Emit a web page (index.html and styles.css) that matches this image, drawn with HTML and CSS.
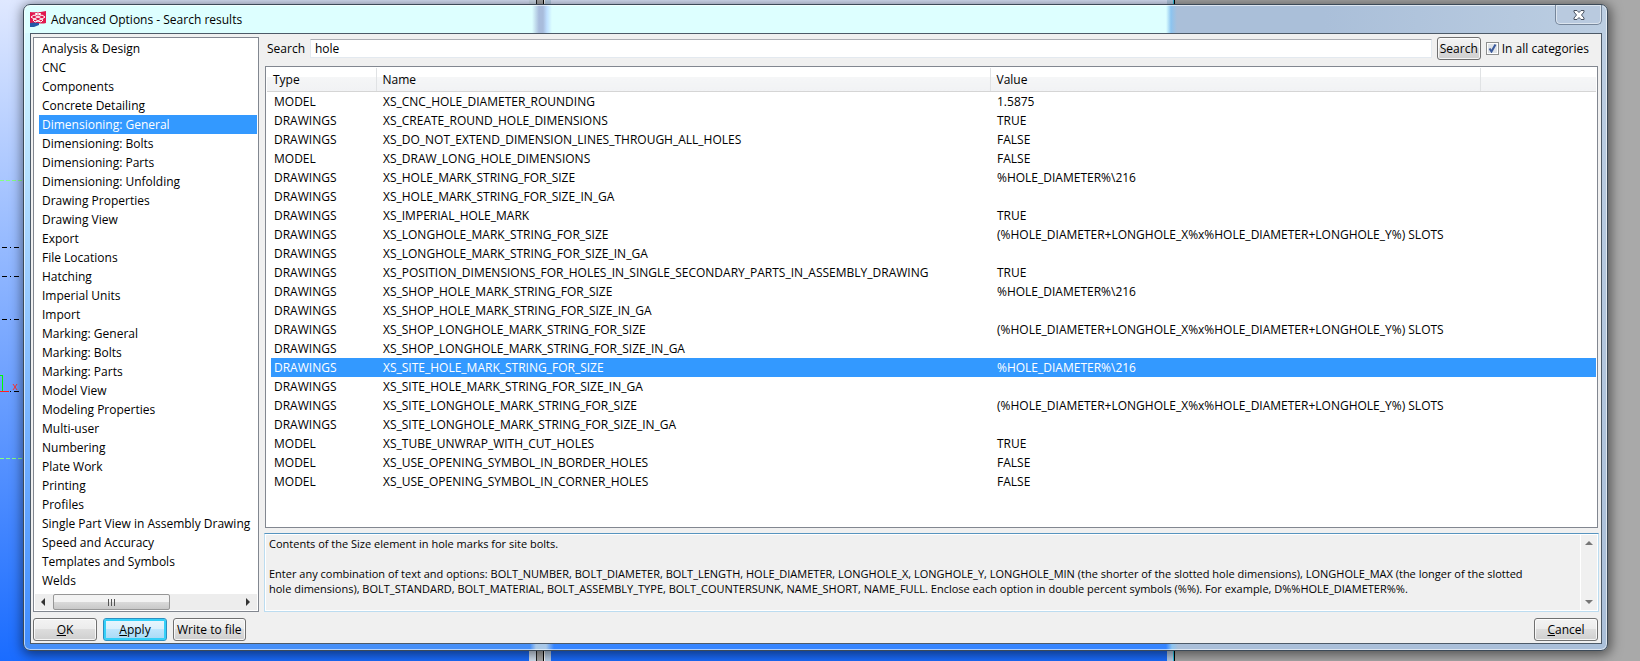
FILE: index.html
```html
<!DOCTYPE html>
<html lang="en">
<head>
<meta charset="utf-8">
<title>Advanced Options - Search results</title>
<link rel="stylesheet" href="styles.css">
</head>
<body>
<div class="desktop" aria-hidden="true">
  <div class="view view-left">
    <svg class="axes" viewBox="0 0 24 661" width="24" height="661">
      <g fill="none" shape-rendering="crispEdges">
        <path d="M0 180.500H24M0 458.500H24" stroke="#84ff84" stroke-dasharray="4 2"/>
        <path d="M2 247.500H20M2 276.500H20M2 319.500H20" stroke="#000" stroke-dasharray="5 3 1 3"/>
        <path d="M10 391.500H20" stroke="#000" stroke-dasharray="1 3 5 3"/>
        <path d="M0 375.500H2.500V391" stroke="#0f0"/>
        <path d="M0 391.500H9" stroke="#f22"/>
      </g>
      <path d="M13 384l4 6M17 384l-4 6" stroke="#f33" fill="none"/>
    </svg>
  </div>
  <div class="gap"></div>
  <div class="view view-right"></div>
  <div class="edge"></div>
</div>
<main class="window">
  <header class="titlebar">
    <svg class="logo" viewBox="0 0 16 16" width="16" height="16">
      <path d="M0 10h9v4l-5 2H0z" fill="#2458a8"/>
      <path d="M0 1q8 1 16-1v12q-4 1-8 0t-8 0z" fill="#e0194f"/>
      <path d="M1 6l3-2 4 2 4-2 3 2-3 2-4-2-4 2zM3 9l2-1 3 2 3-2 2 1-2 2-3-1-3 1zM5 3l3-1 3 1-3 1z" fill="none" stroke="#fff" stroke-width="1"/>
    </svg>
    <h1>Advanced Options - Search results</h1>
    <button class="close" type="button" aria-label="Close">
      <svg viewBox="0 0 12 10" width="12" height="10"><path d="M1 .5h3l2 2 2-2h3v1.500L8.500 5 11 8v1.500H8l-2-2-2 2H1V8l2.500-3L1 2z" fill="#fff" stroke="#4a5260"/></svg>
    </button>
  </header>
  <div class="client">
    <div class="panes">
      <nav class="categories">
        <ul>
          <li>Analysis &amp; Design</li><li>CNC</li><li>Components</li><li>Concrete Detailing</li><li class="selected">Dimensioning: General</li><li>Dimensioning: Bolts</li><li>Dimensioning: Parts</li><li>Dimensioning: Unfolding</li><li>Drawing Properties</li><li>Drawing View</li><li>Export</li><li>File Locations</li><li>Hatching</li><li>Imperial Units</li><li>Import</li><li>Marking: General</li><li>Marking: Bolts</li><li>Marking: Parts</li><li>Model View</li><li>Modeling Properties</li><li>Multi-user</li><li>Numbering</li><li>Plate Work</li><li>Printing</li><li>Profiles</li><li>Single Part View in Assembly Drawing</li><li>Speed and Accuracy</li><li>Templates and Symbols</li><li>Welds</li>
        </ul>
        <div class="hscroll">
          <svg viewBox="0 0 18 16" width="18" height="16"><path d="M10 4v8L6 8z" fill="#333"/></svg>
          <span class="thumb"><i></i><i></i><i></i></span>
          <svg viewBox="0 0 18 16" width="18" height="16"><path d="M7 4v8l4-4z" fill="#333"/></svg>
        </div>
      </nav>
      <section class="results">
        <form class="search">
          <label for="q">Search</label>
          <input id="q" class="query" type="text" value="hole">
          <button class="btn" type="button">Search</button>
          <span class="check"><input id="all" type="checkbox" checked><label for="all">In all categories</label></span>
        </form>
        <div class="grid">
          <table>
            <colgroup><col class="c-type"><col class="c-name"><col class="c-value"><col></colgroup>
            <thead><tr><th>Type</th><th>Name</th><th>Value</th><th></th></tr></thead>
            <tbody>
              <tr><td>MODEL</td><td>XS_CNC_HOLE_DIAMETER_ROUNDING</td><td>1.5875</td><td></td></tr>
              <tr><td>DRAWINGS</td><td>XS_CREATE_ROUND_HOLE_DIMENSIONS</td><td>TRUE</td><td></td></tr>
              <tr><td>DRAWINGS</td><td>XS_DO_NOT_EXTEND_DIMENSION_LINES_THROUGH_ALL_HOLES</td><td>FALSE</td><td></td></tr>
              <tr><td>MODEL</td><td>XS_DRAW_LONG_HOLE_DIMENSIONS</td><td>FALSE</td><td></td></tr>
              <tr><td>DRAWINGS</td><td>XS_HOLE_MARK_STRING_FOR_SIZE</td><td>%HOLE_DIAMETER%\216</td><td></td></tr>
              <tr><td>DRAWINGS</td><td>XS_HOLE_MARK_STRING_FOR_SIZE_IN_GA</td><td></td><td></td></tr>
              <tr><td>DRAWINGS</td><td>XS_IMPERIAL_HOLE_MARK</td><td>TRUE</td><td></td></tr>
              <tr><td>DRAWINGS</td><td>XS_LONGHOLE_MARK_STRING_FOR_SIZE</td><td>(%HOLE_DIAMETER+LONGHOLE_X%x%HOLE_DIAMETER+LONGHOLE_Y%) SLOTS</td><td></td></tr>
              <tr><td>DRAWINGS</td><td>XS_LONGHOLE_MARK_STRING_FOR_SIZE_IN_GA</td><td></td><td></td></tr>
              <tr><td>DRAWINGS</td><td>XS_POSITION_DIMENSIONS_FOR_HOLES_IN_SINGLE_SECONDARY_PARTS_IN_ASSEMBLY_DRAWING</td><td>TRUE</td><td></td></tr>
              <tr><td>DRAWINGS</td><td>XS_SHOP_HOLE_MARK_STRING_FOR_SIZE</td><td>%HOLE_DIAMETER%\216</td><td></td></tr>
              <tr><td>DRAWINGS</td><td>XS_SHOP_HOLE_MARK_STRING_FOR_SIZE_IN_GA</td><td></td><td></td></tr>
              <tr><td>DRAWINGS</td><td>XS_SHOP_LONGHOLE_MARK_STRING_FOR_SIZE</td><td>(%HOLE_DIAMETER+LONGHOLE_X%x%HOLE_DIAMETER+LONGHOLE_Y%) SLOTS</td><td></td></tr>
              <tr><td>DRAWINGS</td><td>XS_SHOP_LONGHOLE_MARK_STRING_FOR_SIZE_IN_GA</td><td></td><td></td></tr>
              <tr class="selected"><td>DRAWINGS</td><td>XS_SITE_HOLE_MARK_STRING_FOR_SIZE</td><td>%HOLE_DIAMETER%\216</td><td></td></tr>
              <tr><td>DRAWINGS</td><td>XS_SITE_HOLE_MARK_STRING_FOR_SIZE_IN_GA</td><td></td><td></td></tr>
              <tr><td>DRAWINGS</td><td>XS_SITE_LONGHOLE_MARK_STRING_FOR_SIZE</td><td>(%HOLE_DIAMETER+LONGHOLE_X%x%HOLE_DIAMETER+LONGHOLE_Y%) SLOTS</td><td></td></tr>
              <tr><td>DRAWINGS</td><td>XS_SITE_LONGHOLE_MARK_STRING_FOR_SIZE_IN_GA</td><td></td><td></td></tr>
              <tr><td>MODEL</td><td>XS_TUBE_UNWRAP_WITH_CUT_HOLES</td><td>TRUE</td><td></td></tr>
              <tr><td>MODEL</td><td>XS_USE_OPENING_SYMBOL_IN_BORDER_HOLES</td><td>FALSE</td><td></td></tr>
              <tr><td>MODEL</td><td>XS_USE_OPENING_SYMBOL_IN_CORNER_HOLES</td><td>FALSE</td><td></td></tr>
            </tbody>
          </table>
        </div>
        <div class="help">
          <div class="help-text">
            <p>Contents of the Size element in hole marks for site bolts.</p>
            <p>Enter any combination of text and options: BOLT_NUMBER, BOLT_DIAMETER, BOLT_LENGTH, HOLE_DIAMETER, LONGHOLE_X, LONGHOLE_Y, LONGHOLE_MIN (the shorter of the slotted hole dimensions), LONGHOLE_MAX (the longer of the slotted<br>hole dimensions), BOLT_STANDARD, BOLT_MATERIAL, BOLT_ASSEMBLY_TYPE, BOLT_COUNTERSUNK, NAME_SHORT, NAME_FULL. Enclose each option in double percent symbols (%%). For example, D%%HOLE_DIAMETER%%.</p>
          </div>
          <div class="vscroll">
            <svg viewBox="0 0 16 16" width="16" height="16"><path d="M4 10h8L8 6z" fill="#777"/></svg>
            <svg viewBox="0 0 16 16" width="16" height="16"><path d="M4 6h8l-4 4z" fill="#777"/></svg>
          </div>
        </div>
      </section>
    </div>
    <footer class="actions">
      <button class="btn wide" type="button"><u>O</u>K</button>
      <button class="btn wide default" type="button"><u>A</u>pply</button>
      <button class="btn" type="button">Write to file</button>
      <button class="btn wide cancel" type="button"><u>C</u>ancel</button>
    </footer>
  </div>
</main>
</body>
</html>
```
FILE: styles.css
```css
* { box-sizing: border-box; }
html, body { height: 100%; }
body {
  margin: 0;
  padding: 4px 32px 10px 23px;
  overflow: hidden;
  background: #a9a9a9;
  color: #000;
  font: 12px/15px "Open Sans", "Noto Sans", sans-serif;
}
button, input { font: inherit; color: inherit; }

.desktop { position: absolute; inset: 0; display: flex; z-index: -1; }
.view { background: linear-gradient(#dfe8ff, #1a6cff); }
.view-left { flex: 0 0 529px; }
.view-right { flex: 0 0 616px; }
.gap {
  flex: 0 0 22px;
  background: linear-gradient(90deg, #d4e2f2 7px, #222 7px 8px, #a9a9a9 8px 14px, #000 14px 15px, #fff 15px 16px, #bdd2ea 16px);
}
.edge {
  flex: 0 0 8px;
  background: linear-gradient(90deg, #b9cfe8 6px, #29c8ea 6px 7px, #000 7px);
}
.axes { display: block; }

.window {
  height: 100%;
  display: flex;
  flex-direction: column;
  padding: 0 5px 6px 6px;
  border: 1px solid #3c4a58;
  border-radius: 7px;
  background:
    linear-gradient(90deg, #dff 0 508px, #a8bcdc 515px 519px, #bfe0ff 523px, #dff 528px 1142px, #8cc4f0 1147px, #aabfd9 1153px 1300px, #bccee2) top / 100% 28px no-repeat,
    linear-gradient(#bccee2, #aabfd9) right / 7px 100% no-repeat,
    linear-gradient(90deg, #468ff8 0 506px, #a9c8e8 512px 522px, #3584ff 530px 1142px, #8cc4f0 1148px, #aabfd9 1154px) bottom / 100% 8px no-repeat,
    linear-gradient(#dff, #a0d0ff 40%, #3f8cff);
  box-shadow: inset 0 0 0 1px rgba(255, 255, 255, .6), 1px 2px 12px 2px rgba(0, 0, 0, .5);
}
.titlebar { flex: 0 0 28px; display: flex; align-items: center; gap: 5px; }
.titlebar h1 { margin: 0; flex: 1; font-size: 12px; font-weight: 400; }
.close {
  align-self: flex-start;
  width: 47px;
  height: 20px;
  display: grid;
  place-items: center;
  padding: 0;
  border: 1px solid #76869a;
  border-top: 0;
  border-radius: 0 0 5px 5px;
  background: #b9cadf;
  box-shadow: inset 0 0 0 1px rgba(255, 255, 255, .5);
}
.client {
  flex: 1;
  min-height: 0;
  display: flex;
  flex-direction: column;
  gap: 6px;
  padding: 3px 2px 2px;
  border: 1px solid #4d5a68;
  background: #f0f0f0;
}
.panes { flex: 1; min-height: 0; display: flex; gap: 5px; }

.categories {
  flex: 0 0 226px;
  display: flex;
  flex-direction: column;
  justify-content: space-between;
  padding: 1px 1px 1px 5px;
  border: 1px solid #828790;
  background: #fff;
}
.categories ul { margin: 0; padding: 0; list-style: none; }
.categories li { height: 19px; padding-left: 3px; line-height: 19px; white-space: nowrap; }
.selected { background: #3399ff; color: #fff; }
.hscroll { display: flex; height: 16px; margin-left: -4px; background: #ededed; }
.hscroll svg:last-child { margin-left: auto; }
.thumb {
  width: 117px;
  display: flex;
  align-items: center;
  justify-content: center;
  gap: 2px;
  border: 1px solid #979797;
  border-radius: 2px;
  background: linear-gradient(#f3f3f3 50%, #dadada 50%, #c8c8c8);
}
.thumb i { width: 1px; height: 7px; background: #555; }

.results { flex: 1; min-width: 0; display: flex; flex-direction: column; }
.search { display: flex; align-items: center; height: 23px; margin: 0 0 6px; padding-left: 3px; }
.query {
  flex: 1;
  min-width: 0;
  height: 19px;
  margin: 0 5px;
  padding: 0 4px;
  border: 1px solid #e3e9ef;
  border-top-color: #abadb3;
  background: #fff;
}
.btn {
  height: 23px;
  padding: 0 3px;
  border: 1px solid #707070;
  border-radius: 3px;
  background: linear-gradient(#f3f3f3, #ebebeb 50%, #dddddd 50%, #cfcfcf);
  box-shadow: inset 0 0 0 1px rgba(255, 255, 255, .8);
  white-space: nowrap;
}
.search .btn { padding: 0 2px; }
.check { display: flex; align-items: center; margin: 0 10px 0 5px; }
.check input {
  appearance: none;
  width: 13px;
  height: 13px;
  margin: 0 3px 0 0;
  border: 1px solid #8e8f8f;
  background:
    url("data:image/svg+xml,%3Csvg xmlns='http://www.w3.org/2000/svg' viewBox='0 0 11 11'%3E%3Cpath d='M2.500 5.500l2 3 4-7' fill='none' stroke='%233b5a9c' stroke-width='2'/%3E%3C/svg%3E"),
    #dfe3e8;
  box-shadow: inset 0 0 0 1px #fff;
}

.grid { flex: 1; min-height: 0; margin: 0 1px; padding: 1px; border: 1px solid #828790; background: #fff; }
table { width: 100%; table-layout: fixed; border-collapse: collapse; }
.c-type { width: 109px; }
.c-name { width: 614px; }
.c-value { width: 490px; }
th {
  height: 23px;
  padding: 0 6px;
  border-right: 1px solid #e0e2e4;
  border-bottom: 1px solid #d5d5d5;
  background: linear-gradient(#fff 40%, #f5f6f7 40%, #f1f2f4);
  text-align: left;
  font-weight: 400;
}
th:last-child { border-right: 0; }
td { height: 19px; padding: 0 0 0 7px; white-space: nowrap; }
tbody tr:first-child td { height: 20px; padding-top: 1px; }
tbody .selected { background: linear-gradient(90deg, #fff 4px, #3399ff 4px); }

.help {
  flex: 0 0 79px;
  display: flex;
  margin-top: 5px;
  padding: 1px;
  border: 1px solid #bcdcf0;
  border-top-color: #5794bf;
  box-shadow: inset 0 0 0 1px #fff;
}
.help-text { flex: 1; min-width: 0; padding: 1px 3px; font-size: 11px; }
.help p { margin: 0; }
.help p + p { margin-top: 15px; }
.vscroll { flex: 0 0 16px; display: flex; flex-direction: column; justify-content: space-between; border-left: 1px solid #fff; }

.actions { display: flex; gap: 6px; }
.wide { width: 64px; }
.cancel { margin-left: auto; margin-right: 1px; }
.default {
  border-color: #2c8fc0;
  background: linear-gradient(#eaf6fd, #d9f0fc 50%, #bee6fd 50%, #a7d9f5);
  box-shadow: inset 0 0 0 2px #35d0f8;
}
```
